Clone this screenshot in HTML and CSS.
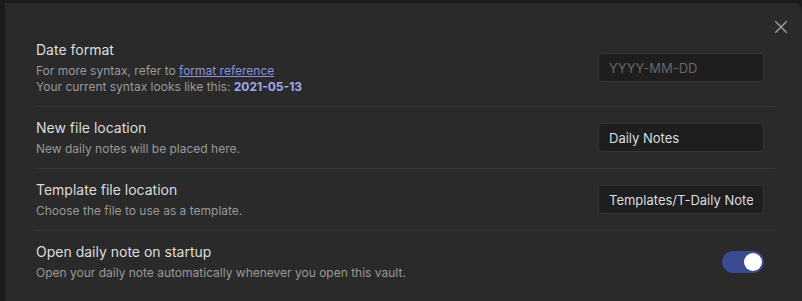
FILE: index.html
```html
<!DOCTYPE html>
<html lang="en">

<head>
    <meta charset="UTF-8">
    <meta name="viewport" content="width=device-width, initial-scale=1.0">
    <title>Daily notes settings</title>
    <link rel="stylesheet" href="styles.css">
</head>

<body>
    <div class="modal">
        <span class="close">
            <svg width="12" height="12" viewBox="0 0 12 12">
                <path d="M0.5 0.5 L11.5 11.5 M11.5 0.5 L0.5 11.5" stroke="currentColor" stroke-width="1.5" fill="none" stroke-linecap="round"/>
            </svg>
        </span>

        <div class="setting-item">
            <div class="setting-info">
                <div class="setting-name">Date format</div>
                <div class="setting-desc">
                    For more syntax, refer to <a href="#">format reference</a><br>
                    Your current syntax looks like this: <b class="accent">2021-05-13</b>
                </div>
            </div>
            <input type="text" class="setting-input" placeholder="YYYY-MM-DD">
        </div>

        <div class="setting-item">
            <div class="setting-info">
                <div class="setting-name">New file location</div>
                <div class="setting-desc">New daily notes will be placed here.</div>
            </div>
            <input type="text" class="setting-input" value="Daily Notes">
        </div>

        <div class="setting-item">
            <div class="setting-info">
                <div class="setting-name">Template file location</div>
                <div class="setting-desc">Choose the file to use as a template.</div>
            </div>
            <input type="text" class="setting-input" value="Templates/T-Daily Notes">
        </div>

        <div class="setting-item">
            <div class="setting-info">
                <div class="setting-name">Open daily note on startup</div>
                <div class="setting-desc">Open your daily note automatically whenever you open this vault.</div>
            </div>
            <div class="toggle is-enabled"><span class="knob"></span></div>
        </div>
    </div>
</body>

</html>
```

FILE: styles.css
```css
html,
body {
    height: 100%;
}

body {
    font-family: Inter, "Noto Sans", sans-serif;
    background-color: #1b1b1b;
    margin: 0;
    padding: 3px 0 0 5px;
    box-sizing: border-box;
    overflow: hidden;
}

.modal {
    position: relative;
    box-sizing: border-box;
    height: 100%;
    background-color: #2a2a2a;
    border-top-right-radius: 8px;
    padding: 26px 27px 0 31px;
}

.close {
    position: absolute;
    top: 18px;
    right: 15px;
    color: #999;
    line-height: 0;
    cursor: pointer;
}

.setting-item {
    display: flex;
    align-items: center;
    justify-content: space-between;
    padding: 11px 11px 11px 0;
    border-top: 1px solid #363636;
}

.setting-item:first-of-type {
    border-top: none;
}

.setting-name {
    font-size: 14px;
    line-height: 20px;
    color: #dcddde;
}

.setting-desc {
    margin-top: 3px;
    font-size: 12px;
    line-height: 16px;
    color: #999;
}

.setting-desc a {
    color: #8a90de;
}

.accent {
    color: #a1a6ea;
    font-weight: bold;
}

.setting-input {
    box-sizing: border-box;
    width: 166px;
    height: 29px;
    padding: 0 10px;
    background-color: #1e1e1e;
    border: 1px solid #363636;
    border-radius: 4px;
    color: #dcddde;
    font-family: Inter, "Noto Sans", sans-serif;
    font-size: 13px;
    outline: none;
}

.setting-input::placeholder {
    color: #666;
}

.toggle {
    position: relative;
    width: 42px;
    height: 22px;
    border-radius: 11px;
    background-color: #3c4a91;
    flex-shrink: 0;
}

.knob {
    position: absolute;
    top: 2px;
    right: 2px;
    width: 18px;
    height: 18px;
    border-radius: 50%;
    background-color: #fff;
}
```
